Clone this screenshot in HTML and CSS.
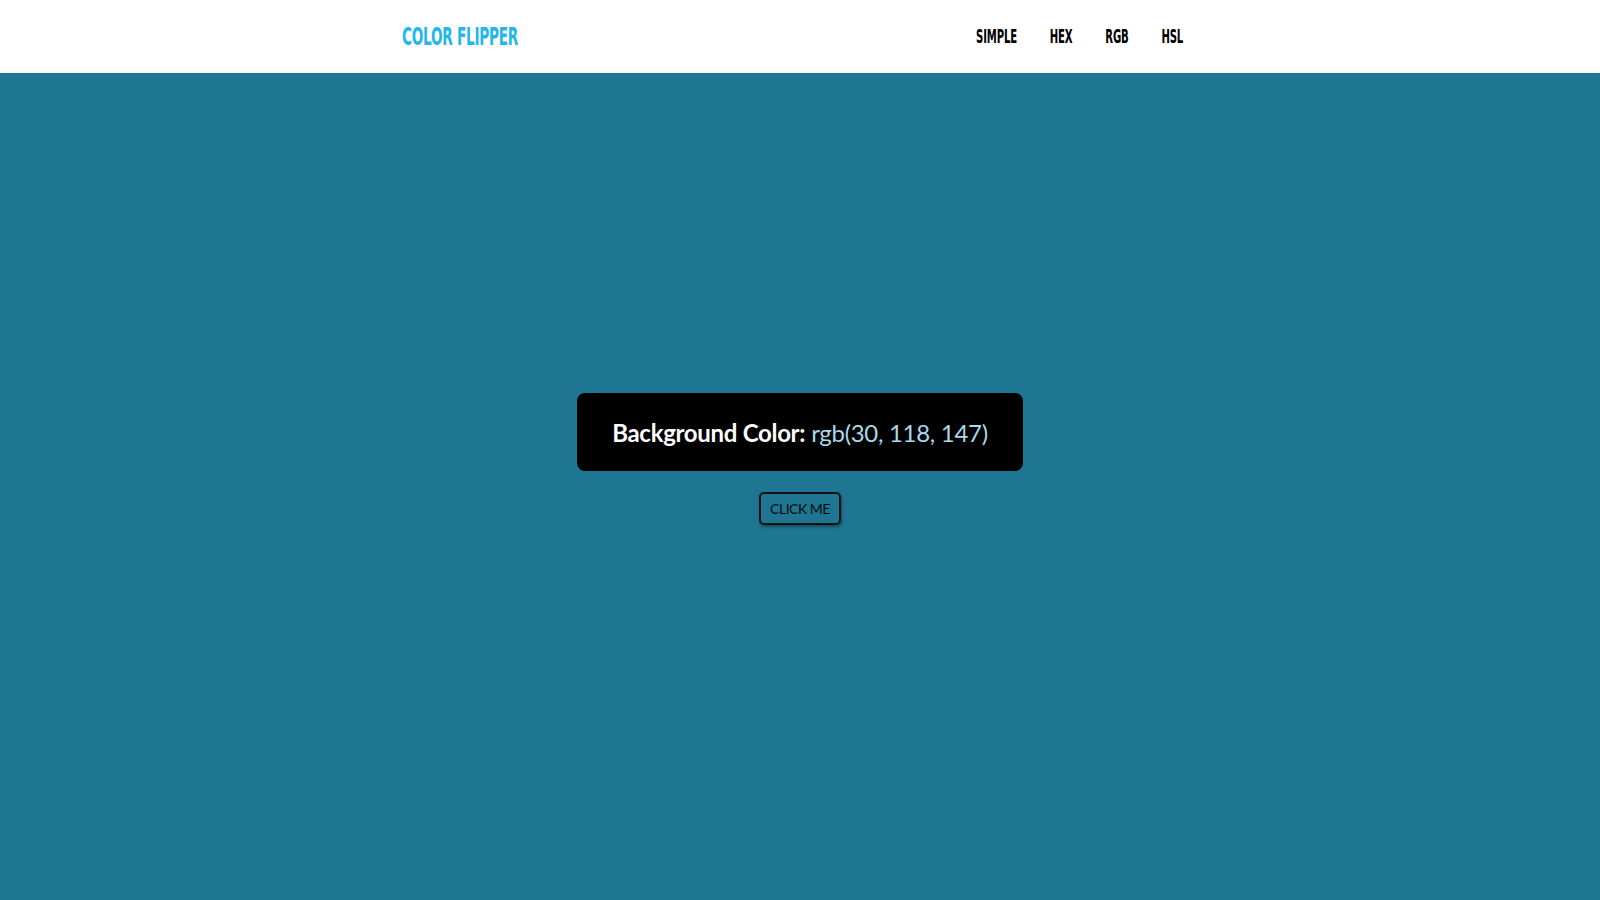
FILE: index.html
```html
<!DOCTYPE html>
<html lang="en">
<head>
<meta charset="utf-8">
<title>Color Flipper</title>
<link rel="stylesheet" href="styles.css">
</head>
<body>
<nav class="navbar">
  <div class="nav-center">
    <h4 class="logo">Color Flipper</h4>
    <ul class="nav-links">
      <li><a href="#">simple</a></li>
      <li><a href="#">hex</a></li>
      <li><a href="#">rgb</a></li>
      <li><a href="#">hsl</a></li>
    </ul>
  </div>
</nav>
<main class="main">
  <div class="container">
    <h2 class="color-box">Background Color: <span class="color">rgb(30, 118, 147)</span></h2>
    <button class="btn" type="button">click me</button>
  </div>
</main>
</body>
</html>
```
FILE: styles.css
```css
* { box-sizing: border-box; margin: 0; padding: 0; }
html, body { height: 100%; }
body {
  background: rgb(30, 118, 147);
  font-family: Lato, "Open Sans", sans-serif;
}
.navbar {
  background: #fff;
  height: 73px;
}
.nav-center {
  width: 781px;
  margin: 0 0 0 402px;
  height: 100%;
  display: flex;
  align-items: center;
  justify-content: space-between;
}
.logo, .nav-links a {
  font-family: "DejaVu Sans", sans-serif;
  font-weight: bold;
  text-transform: uppercase;
}
.logo {
  color: #22b6ed;
  font-size: 25px;
  letter-spacing: -0.5px;
  transform: scaleX(0.545);
  transform-origin: left center;
}
.nav-links {
  list-style: none;
  display: flex;
  gap: 65px;
  transform: scaleX(0.505) translateY(-1px);
  transform-origin: right center;
}
.nav-links a {
  color: #000;
  text-decoration: none;
  font-size: 20px;
  letter-spacing: -0.3px;
}
.main {
  display: flex;
  justify-content: center;
  padding-top: 320px;
}
.container {
  display: flex;
  flex-direction: column;
  align-items: center;
}
.color-box {
  background: #000;
  color: #fff;
  border-radius: 8px;
  width: 446px;
  height: 78px;
  display: flex;
  align-items: center;
  justify-content: center;
  font-size: 24px;
  font-weight: bold;
  letter-spacing: -0.3px;
}
.color-box .color {
  color: #a9d8ea;
  font-weight: normal;
  margin-left: 6px;
}
.btn {
  margin-top: 21px;
  width: 82px;
  height: 33px;
  background: transparent;
  border: 2px solid #111;
  border-radius: 5px;
  box-shadow: 1px 2px 3px rgba(0,0,0,0.35);
  font-family: Lato, sans-serif;
  font-size: 14px;
  text-transform: uppercase;
  color: #0a0a0a;
  letter-spacing: -0.5px;
}
```
